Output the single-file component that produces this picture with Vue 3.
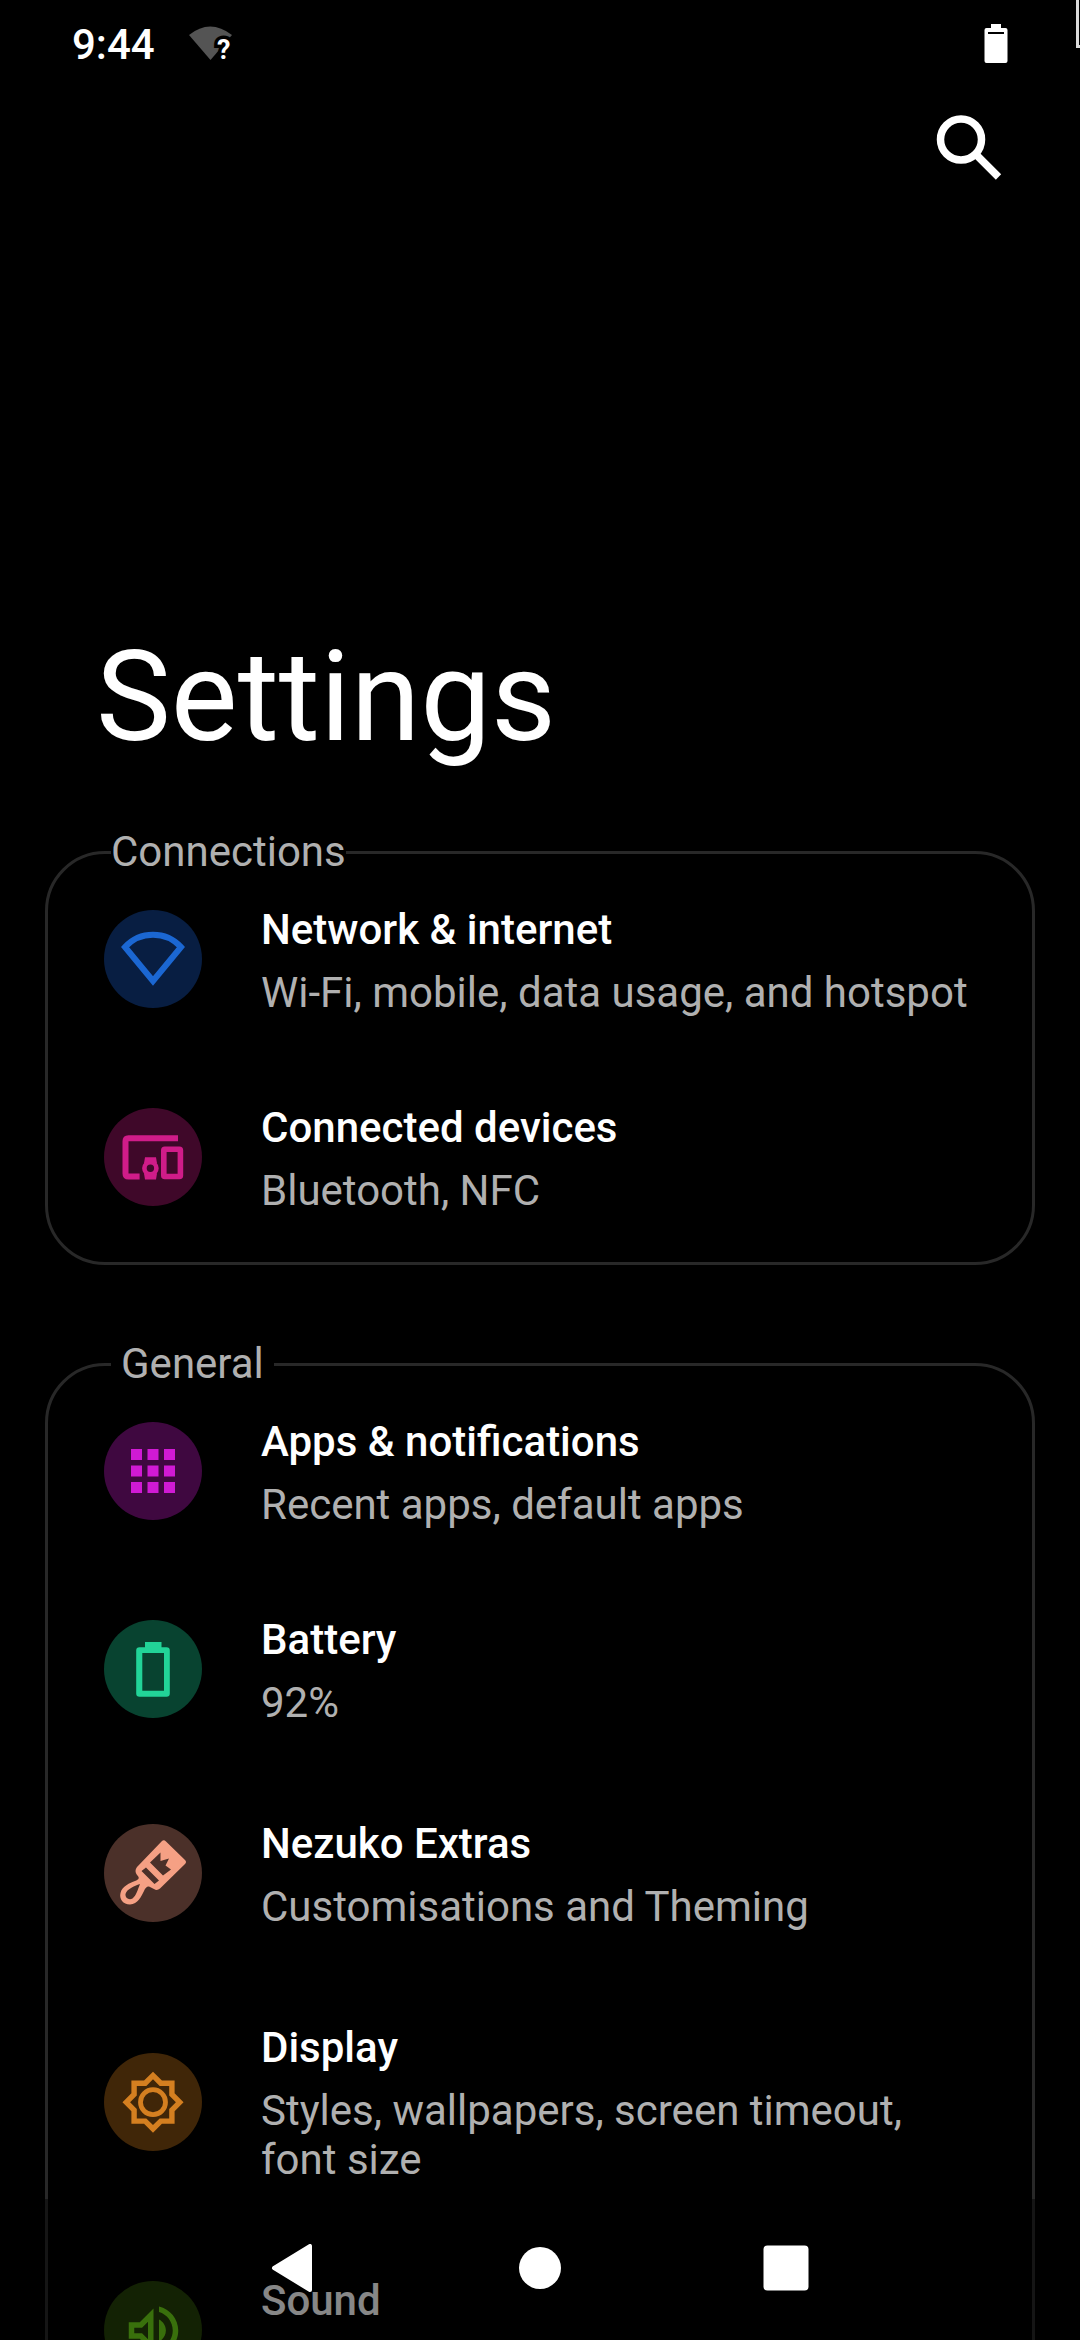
<script setup>
const sections = [
  {
    title: 'Connections',
    inset: false,
    items: [
      { icon: 'network', title: 'Network & internet', summary: 'Wi-Fi, mobile, data usage, and hotspot' },
      { icon: 'devices', title: 'Connected devices', summary: 'Bluetooth, NFC' },
    ],
  },
  {
    title: 'General',
    inset: true,
    items: [
      { icon: 'apps', title: 'Apps & notifications', summary: 'Recent apps, default apps' },
      { icon: 'battery', title: 'Battery', summary: '92%' },
      { icon: 'extras', title: 'Nezuko Extras', summary: 'Customisations and Theming', spaced: true },
      { icon: 'display', title: 'Display', summary: 'Styles, wallpapers, screen timeout, font size', spaced: true },
      { icon: 'sound', title: 'Sound', summary: '', spaced: true },
    ],
  },
]
</script>

<template>
  <div class="screen">
    <header class="status-bar">
      <time class="clock">9:44</time>
      <svg class="wifi" viewBox="0 -4 56 48" role="img" aria-label="Wi-Fi, no internet">
        <path d="M2 11Q23 -6 45 11L23.500 36Z" fill="#545454" />
        <text x="30" y="35" class="wifi-mark">?</text>
      </svg>
      <svg class="charge" viewBox="0 0 24 40" role="img" aria-label="Battery level">
        <path d="M7 0h10v4h4.500a2 2 0 0 1 2 2v31a2 2 0 0 1-2 2h-19a2 2 0 0 1-2-2v-31a2 2 0 0 1 2-2H7z" fill="#fff" />
        <path d="M4 8h16v2H4z" fill="#000" />
      </svg>
      <span class="corner-mark"></span>
    </header>

    <div class="toolbar">
      <button class="search" type="button" aria-label="Search settings">
        <svg viewBox="0 0 66 66" fill="none" stroke="#fff">
          <circle cx="25" cy="24.500" r="20.500" stroke-width="7.500" />
          <path d="M39 38.500L62.500 62" stroke-width="7.500" />
        </svg>
      </button>
    </div>

    <main>
      <h1>Settings</h1>

      <section v-for="section in sections" :key="section.title" class="card">
        <h2 :class="{ inset: section.inset }">{{ section.title }}</h2>
        <a v-for="item in section.items" :key="item.title" href="#" class="row" :class="{ spaced: item.spaced }">
          <span class="badge" :class="item.icon">
            <svg viewBox="0 0 98 98" aria-hidden="true">
              <path v-if="item.icon === 'network'" d="M21 37A38 38 0 0 1 77 37L49 71Z" fill="none" stroke="currentColor" stroke-width="6" />
              <g v-else-if="item.icon === 'devices'" fill="none" stroke="currentColor">
                <path d="M74 30.300H24.500Q21.500 30.300 21.500 33.300V65.500Q21.500 68.500 24.500 68.500H35.600" stroke-width="6" />
                <rect x="59.800" y="41.200" width="16.600" height="27.300" rx="1" stroke-width="5.600" />
                <circle cx="46.400" cy="60.300" r="6" stroke-width="4.600" />
                <path d="M41 49.300h11l1 6H40zM40 65.500h13l-1 6H41z" fill="currentColor" stroke="none" />
              </g>
              <path v-else-if="item.icon === 'apps'" d="M27 27h11v11H27zM43.500 27h11v11h-11zM60 27h11v11H60zM27 43.500h11v11H27zM43.500 43.500h11v11h-11zM60 43.500h11v11H60zM27 60h11v11H27zM43.500 60h11v11h-11zM60 60h11v11H60z" fill="currentColor" />
              <path v-else-if="item.icon === 'battery'" fill="currentColor" fill-rule="evenodd" d="M41 22h16.500v5.300h5a3.300 3.300 0 0 1 3.300 3.300v42.800a3.300 3.300 0 0 1-3.300 3.300h-27a3.300 3.300 0 0 1-3.300-3.300V30.600a3.300 3.300 0 0 1 3.300-3.300H41zM38.300 33v37.700H60V33z" />
              <path
                v-else-if="item.icon === 'extras'"
                fill="currentColor"
                fill-rule="evenodd"
                d="M58 17Q60 15.500 62 17.500L81 36Q83 38 81 40L56 64.500Q53 67 50 65L45 62.500Q42 62 40 67C37 73 34 80 26 80.500C19 80.500 15 75 16.500 69C18 62 26 59 31 57C35 55.500 36 54 33 51Q30 47 33 43ZM37.500 47L50.500 60L55 56.500L42 43.500ZM46 38.500L59 51.500L67 45.500L61.500 41.500L65 34.500L56.500 37V28.500ZM36 60C30 62 23 65 21.500 70C21 74 25 76.500 28.500 74.500C32 72 34 65 36 60Z"
              />
              <g v-else-if="item.icon === 'display'">
                <path transform="translate(16.6 16.8) scale(2.7)" fill="currentColor" fill-rule="evenodd" d="M20 8.690V4h-4.690L12 .69 8.690 4H4v4.690L.69 12 4 15.310V20h4.690L12 23.310 15.310 20H20v-4.690L23.310 12 20 8.690zm-2 5.790V18h-3.520L12 20.480 9.520 18H6v-3.520L3.520 12 6 9.520V6h3.520L12 3.520 14.480 6H18v3.520L20.480 12 18 14.480z" />
                <circle cx="49" cy="49.200" r="12.500" fill="none" stroke="currentColor" stroke-width="4.800" />
              </g>
              <path v-else transform="translate(16.5 16.5) scale(2.75)" fill="currentColor" fill-rule="evenodd" d="M3 9v6h4l5 5V4L7 9H3zm7-.17v6.340L7.830 13H5v-2h2.830L10 8.830zM16.500 12c0-1.770-1.020-3.290-2.500-4.030v8.050c1.480-.73 2.500-2.250 2.500-4.020zM14 3.230v2.060c2.890.86 5 3.540 5 6.710s-2.110 5.850-5 6.710v2.060c4.010-.91 7-4.490 7-8.770s-2.990-7.860-7-8.770z" />
            </svg>
          </span>
          <span class="labels">
            <span class="title">{{ item.title }}</span>
            <span class="summary">{{ item.summary }}</span>
          </span>
        </a>
      </section>
    </main>

    <nav class="nav-bar" aria-label="System navigation">
      <button type="button" aria-label="Back">
        <svg viewBox="0 0 48 48"><path d="M40 2v44L4 24Z" fill="#fff" stroke="#fff" stroke-width="4" stroke-linejoin="round" /></svg>
      </button>
      <button type="button" aria-label="Home">
        <svg viewBox="0 0 48 48"><circle cx="24" cy="24" r="21" fill="#fff" /></svg>
      </button>
      <button type="button" aria-label="Overview">
        <svg viewBox="0 0 48 48"><rect x="1.500" y="1.500" width="45" height="45" rx="4" fill="#fff" /></svg>
      </button>
    </nav>
  </div>
</template>

<style>
html,
body {
  background: #000;
}
</style>

<style scoped>
.screen {
  position: relative;
  height: 100vh;
  overflow: hidden;
  background: #000;
  color: #fff;
  font-family: Roboto, 'Noto Sans', sans-serif;
  font-size: 42px;
  line-height: 49px;
}

button {
  display: flex;
  align-items: center;
  justify-content: center;
  padding: 0;
  border: 0;
  background: none;
}

svg {
  display: block;
}

.status-bar {
  display: flex;
  align-items: center;
  height: 80px;
  padding: 4px 72px 0;
}

.clock {
  font-weight: 500;
}

.wifi {
  width: 56px;
  height: 48px;
  margin-left: 32px;
}

.wifi-mark {
  font-size: 27px;
  font-weight: 700;
  fill: #fff;
  stroke: #000;
  stroke-width: 7px;
  paint-order: stroke;
}

.charge {
  width: 24px;
  height: 40px;
  margin-left: auto;
}

.corner-mark {
  position: absolute;
  top: 0;
  right: 0;
  width: 1px;
  height: 45px;
  border-left: 3px solid #dcdcdc;
  border-bottom: 3px solid #dcdcdc;
}

.toolbar {
  display: flex;
  justify-content: flex-end;
  height: 128px;
  padding: 0 78px;
}

.search {
  width: 66px;
  height: 128px;
}

.search svg {
  width: 66px;
  height: 66px;
}

h1 {
  margin: 411px 96px 80px;
  font-size: 126px;
  font-weight: 400;
  line-height: 148px;
}

.card {
  position: relative;
  margin: 0 45px 98px;
  padding: 6px 0;
  border: 3px solid #282828;
  border-radius: 60px;
}

h2 {
  position: absolute;
  top: -27px;
  left: 63px;
  margin: 0;
  background: #000;
  color: #b0b0b0;
  font-size: 42px;
  font-weight: 400;
}

h2.inset {
  padding: 0 10px;
}

.row {
  display: flex;
  align-items: center;
  gap: 59px;
  padding: 41px 56px;
  color: inherit;
  text-decoration: none;
}

.row.spaced {
  margin-top: 6px;
}

.badge {
  flex: none;
  width: 98px;
  height: 98px;
  border-radius: 50%;
}

.network {
  background: #081e42;
  color: #1b67d2;
}

.devices {
  background: #3f0829;
  color: #d01c89;
}

.apps {
  background: #3f0840;
  color: #d01ad4;
}

.battery {
  background: #084330;
  color: #22d498;
}

.extras {
  background: #4b3029;
  color: #f5a084;
}

.display {
  background: #402608;
  color: #d47f20;
}

.sound {
  background: #254008;
  color: #6cd417;
}

.labels {
  display: flex;
  flex-direction: column;
  gap: 14px;
  padding-top: 4px;
}

.title {
  font-weight: 500;
}

.summary {
  min-height: 49px;
  color: #b0b0b0;
}

.nav-bar {
  position: fixed;
  right: 0;
  bottom: 0;
  left: 0;
  display: flex;
  justify-content: center;
  height: 141px;
  background: rgba(0, 0, 0, 0.47);
}

.nav-bar button {
  width: 246px;
  height: 138px;
}

.nav-bar svg {
  width: 48px;
  height: 48px;
}
</style>
